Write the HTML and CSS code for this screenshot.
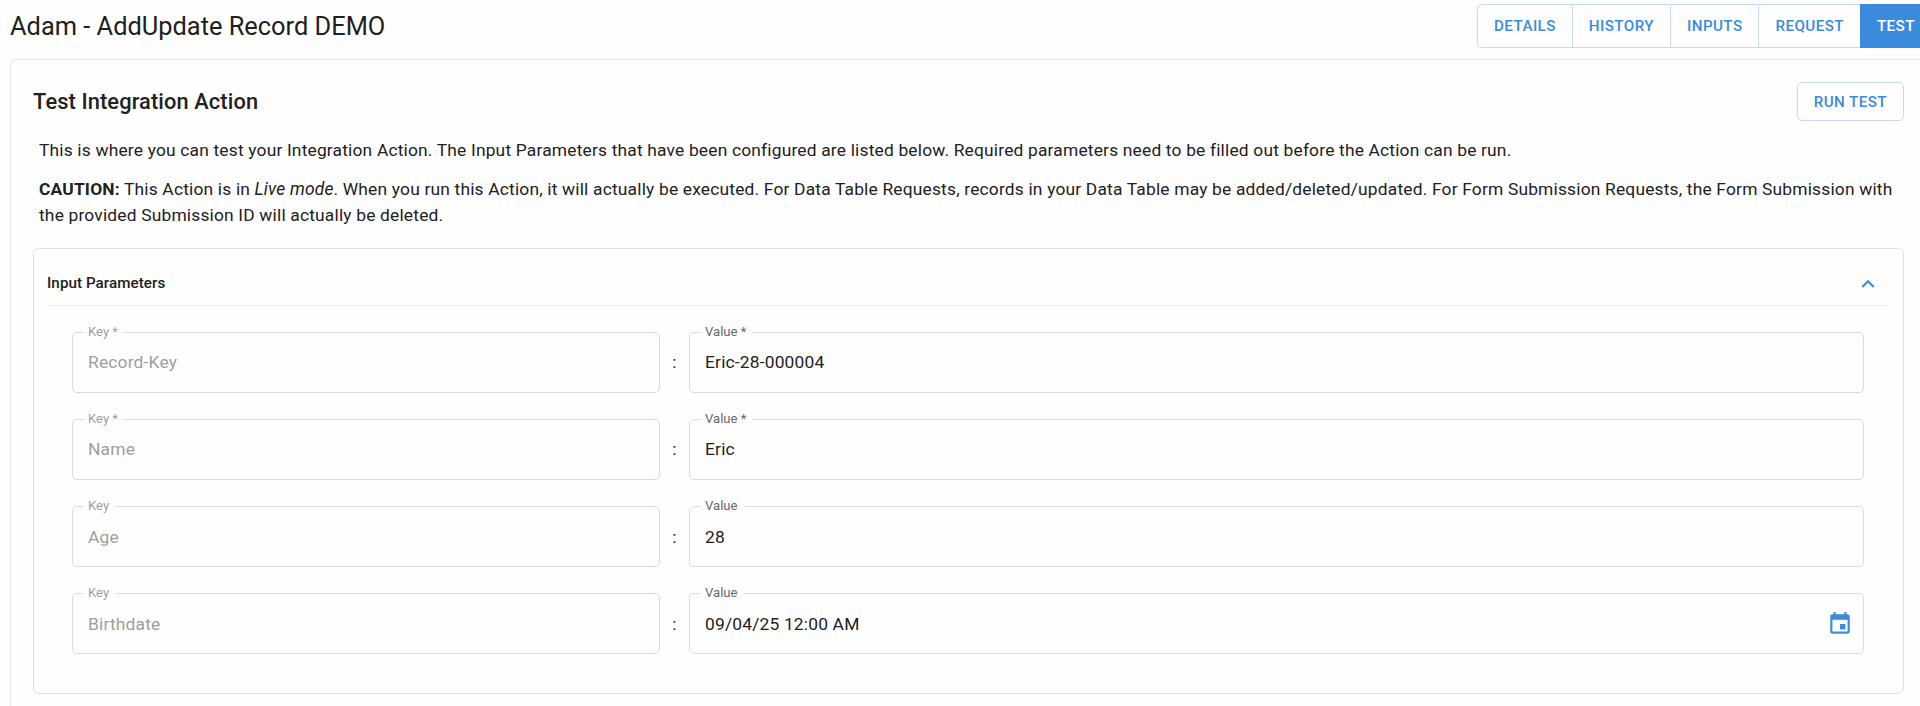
FILE: index.html
```html
<!DOCTYPE html>
<html lang="en">
<head>
  <meta charset="UTF-8" />
  <title>Adam - AddUpdate Record DEMO</title>
  <link rel="stylesheet" href="styles.css">
</head>
<body>
  <header class="page-header">
    <h1>Adam - AddUpdate Record DEMO</h1>
    <nav class="tabs">
      <button class="tab">DETAILS</button>
      <button class="tab">HISTORY</button>
      <button class="tab">INPUTS</button>
      <button class="tab">REQUEST</button>
      <button class="tab active">TEST</button>
    </nav>
  </header>

  <main class="card">
    <div class="card-header">
      <h2>Test Integration Action</h2>
      <button class="run-button">RUN TEST</button>
    </div>

    <div class="intro">
      <p>This is where you can test your Integration Action. The Input Parameters that have been configured are listed below. Required parameters need to be filled out before the Action can be run.</p>
      <p><strong>CAUTION:</strong> This Action is in <em>Live mode</em>. When you run this Action, it will actually be executed. For Data Table Requests, records in your Data Table may be added/deleted/updated. For Form Submission Requests, the Form Submission with the provided Submission ID will actually be deleted.</p>
    </div>

    <section class="panel">
      <div class="panel-header">
        <h3>Input Parameters</h3>
        <svg class="icon" viewBox="0 0 24 24"><path d="M12 8l-6 6 1.41 1.41L12 10.83l4.59 4.58L18 14z"/></svg>
      </div>

      <div class="rows">
        <div class="row">
          <fieldset class="field key"><legend>Key *</legend><div class="text">Record-Key</div></fieldset>
          <span class="colon">:</span>
          <fieldset class="field value"><legend>Value *</legend><div class="text">Eric-28-000004</div></fieldset>
        </div>
        <div class="row">
          <fieldset class="field key"><legend>Key *</legend><div class="text">Name</div></fieldset>
          <span class="colon">:</span>
          <fieldset class="field value"><legend>Value *</legend><div class="text">Eric</div></fieldset>
        </div>
        <div class="row">
          <fieldset class="field key"><legend>Key</legend><div class="text">Age</div></fieldset>
          <span class="colon">:</span>
          <fieldset class="field value"><legend>Value</legend><div class="text">28</div></fieldset>
        </div>
        <div class="row">
          <fieldset class="field key"><legend>Key</legend><div class="text">Birthdate</div></fieldset>
          <span class="colon">:</span>
          <fieldset class="field value">
            <legend>Value</legend>
            <div class="text">
              <span>09/04/25 12:00 AM</span>
              <svg class="icon" viewBox="0 0 24 24"><path d="M17 12h-5v5h5v-5zM16 1v2H8V1H6v2H5c-1.11 0-1.99.9-1.99 2L3 19c0 1.1.89 2 2 2h14c1.1 0 2-.9 2-2V5c0-1.1-.9-2-2-2h-1V1h-2zm3 18H5V8h14v11z"/></svg>
            </div>
          </fieldset>
        </div>
      </div>
    </section>
  </main>
</body>
</html>
```

FILE: styles.css
```css
* {
  box-sizing: border-box;
}
body {
  margin: 0;
  height: 706px;
  overflow: hidden;
  background-color: #fefefe;
  color: #212121;
  font-family: Roboto, "Liberation Sans", sans-serif;
  font-size: 17.4px;
  line-height: 26.2px;
  letter-spacing: 0.0103em;
}
h1, h2, h3, p {
  margin: 0;
}
button {
  font-family: inherit;
  font-size: 15.2px;
  font-weight: 500;
  line-height: 26px;
  letter-spacing: 0.027em;
  color: #3a8bdd;
  background-color: transparent;
  border: 1px solid #c5daf4;
  white-space: nowrap;
  cursor: pointer;
}
.page-header {
  display: flex;
  justify-content: space-between;
  align-items: flex-start;
  width: 1940px;
  height: 59px;
  padding: 4px 0 0 10px;
}
h1 {
  font-size: 25.4px;
  font-weight: 400;
  line-height: 44px;
  letter-spacing: 0;
}
.tabs {
  display: flex;
  width: 463px;
  height: 44px;
}
.tab {
  padding: 0 16px;
  border-right: none;
}
.tab:first-child {
  border-radius: 5px 0 0 5px;
}
.tab.active {
  flex: 1;
  background-color: #3a8bdd;
  border-color: #3a8bdd;
  color: white;
  text-align: left;
}
.card {
  width: 1940px;
  height: 680px;
  padding: 22px 45px 0 22px;
  margin-left: 10px;
  border: 1px solid #e6e6e6;
  border-radius: 5px;
}
.card-header {
  display: flex;
  justify-content: space-between;
  align-items: center;
  height: 39px;
}
h2 {
  padding-top: 1px;
  font-size: 21.8px;
  font-weight: 500;
  letter-spacing: 0.0055em;
}
.run-button {
  height: 39px;
  padding: 0 16px;
  border-radius: 5px;
}
.intro {
  padding: 16px 0 0 6px;
}
.intro p + p {
  margin-top: 13px;
}
strong {
  font-weight: 700;
}
.panel {
  height: 446px;
  margin-top: 19.4px;
  padding: 13px 14px 0 13px;
  border: 1px solid #e0e0e0;
  border-radius: 6px;
}
.panel-header {
  display: flex;
  justify-content: space-between;
  align-items: center;
  height: 44px;
  padding-right: 8px;
  border-bottom: 1px solid #ececec;
}
h3 {
  font-size: 15.2px;
  font-weight: 500;
  letter-spacing: 0.004em;
}
.icon {
  flex: none;
  width: 26px;
  height: 26px;
  fill: #3a8bdd;
}
.rows {
  display: grid;
  gap: 26.1px;
  padding: 26px 25px 0;
}
.row {
  display: flex;
  align-items: center;
  height: 61px;
}
.field {
  min-width: 0;
  height: 61px;
  margin: 0;
  padding: 0 10px;
  border: 1px solid #dadada;
  border-radius: 5px;
}
.field.key {
  width: 588px;
  color: #9e9e9e;
}
.field.value {
  flex: 1;
}
.field legend {
  height: 1px;
  padding: 0 6px 0 5px;
  font-size: 13.1px;
  line-height: 1px;
  letter-spacing: 0;
  transform: translateY(-1px);
}
.field.value legend {
  color: #666;
}
.field .text {
  display: flex;
  justify-content: space-between;
  align-items: center;
  height: 59px;
  padding: 0 0 0 5px;
}
.colon {
  width: 29px;
  text-align: center;
}
```
